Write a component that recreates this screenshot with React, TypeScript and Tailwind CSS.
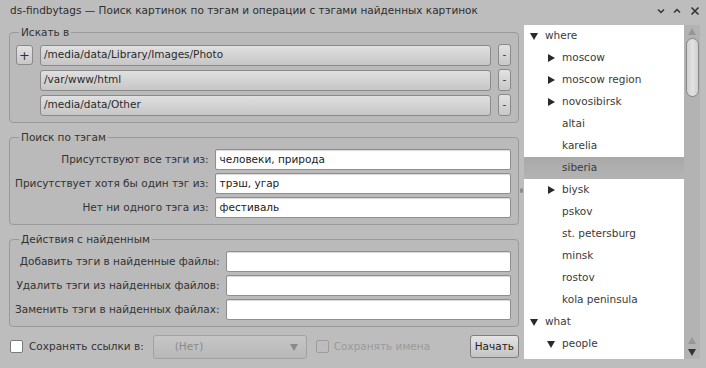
import React from "react";

const font = { fontFamily: '"DejaVu Sans", "Noto Sans", sans-serif' };

type TreeRow = { label: string; level: number; arrow?: "down" | "right"; selected?: boolean };

const TREE: TreeRow[] = [
  { label: "where", level: 0, arrow: "down" },
  { label: "moscow", level: 1, arrow: "right" },
  { label: "moscow region", level: 1, arrow: "right" },
  { label: "novosibirsk", level: 1, arrow: "right" },
  { label: "altai", level: 1 },
  { label: "karelia", level: 1 },
  { label: "siberia", level: 1, selected: true },
  { label: "biysk", level: 1, arrow: "right" },
  { label: "pskov", level: 1 },
  { label: "st. petersburg", level: 1 },
  { label: "minsk", level: 1 },
  { label: "rostov", level: 1 },
  { label: "kola peninsula", level: 1 },
  { label: "what", level: 0, arrow: "down" },
  { label: "people", level: 1, arrow: "down" },
];

const PATHS = ["/media/data/Library/Images/Photo", "/var/www/html", "/media/data/Other"];

const SEARCH = [
  { label: "Присутствуют все тэги из:", value: "человеки, природа" },
  { label: "Присутствует хотя бы один тэг из:", value: "трэш, угар" },
  { label: "Нет ни одного тэга из:", value: "фестиваль" },
];

const ACTIONS = [
  "Добавить тэги в найденные файлы:",
  "Удалить тэги из найденных файлов:",
  "Заменить тэги в найденных файлах:",
];

const Arrow = ({ dir, color = "#2a2a2a" }: { dir: "down" | "right" | "up"; color?: string }) => {
  const pts = dir === "down" ? "0,1 8,1 4,8" : dir === "up" ? "0,7 8,7 4,0" : "1,0 8,4 1,8";
  return (
    <svg width="8" height="8" viewBox="0 0 8 8" className="shrink-0">
      <polygon points={pts} fill={color} />
    </svg>
  );
};

const Group = ({ title, children }: { title: string; children: React.ReactNode }) => (
  <fieldset className="border border-[#9a9a9a] rounded-[4px] bg-[#bababa] pl-[5px] pr-[7px] pt-[5px] pb-[6px]">
    <legend className="ml-[4px] px-[2px] leading-[13px] text-[#333]">{title}</legend>
    {children}
  </fieldset>
);

const TextInput = ({ value }: { value?: string }) => (
  <div className="h-[21px] bg-white border border-[#8e8e8e] rounded-[2px] shadow-[inset_0_1px_1px_rgba(0,0,0,0.15)] flex items-center pl-[4px] text-[#222]">
    {value}
  </div>
);

export default function App() {
  return (
    <div style={font} className="w-[706px] h-[368px] bg-[#bdbdbd] flex flex-col text-[10.5px] text-[#333] overflow-hidden">
      <div className="h-[21px] flex items-center pl-[10px] pr-[6px] text-[#2e2e2e]">
        <span>ds-findbytags — Поиск картинок по тэгам и операции с тэгами найденных картинок</span>
        <div className="ml-auto flex items-center gap-[6px]">
          <svg width="10" height="10" viewBox="0 0 10 10">
            <path d="M2 3.5 L5 6.5 L8 3.5" stroke="#333" strokeWidth="1.5" fill="none" />
          </svg>
          <svg width="10" height="10" viewBox="0 0 10 10">
            <path d="M2 6.5 L5 3.5 L8 6.5" stroke="#333" strokeWidth="1.5" fill="none" />
          </svg>
          <svg width="10" height="10" viewBox="0 0 10 10" className="ml-[2px]">
            <path d="M1.5 1.5 L8.5 8.5 M8.5 1.5 L1.5 8.5" stroke="#333" strokeWidth="1.6" fill="none" />
          </svg>
        </div>
      </div>

      <div className="flex flex-1 min-h-0 pl-[9px] pr-[6px] pb-[9px]">
        <div className="w-[510px] flex flex-col pt-[5px]">
          <Group title="Искать в">
            <div className="flex flex-col gap-[3px] pl-[1px]">
              {PATHS.map((p, i) => (
                <div key={p} className="flex items-center">
                  <div className="w-[17px] mr-[7px] shrink-0">
                    {i === 0 && (
                      <div className="h-[20px] rounded-[3px] border border-[#8a8a8a] bg-gradient-to-b from-[#e2e2e2] to-[#c8c8c8] flex items-center justify-center text-[13px] leading-none text-[#333]">
                        +
                      </div>
                    )}
                  </div>
                  <div className="flex-1 h-[21px] rounded-[3px] border border-[#8a8a8a] bg-gradient-to-b from-[#e0e0e0] to-[#c6c6c6] flex items-center pl-[3px] text-[#2a2a2a]">
                    {p}
                  </div>
                  <div className="w-[13px] h-[22px] ml-[7px] rounded-[3px] border border-[#8a8a8a] bg-gradient-to-b from-[#e2e2e2] to-[#c8c8c8] flex items-center justify-center text-[#333]">
                    -
                  </div>
                </div>
              ))}
            </div>
          </Group>

          <div className="mt-[8px]">
            <Group title="Поиск по тэгам">
              <div className="grid grid-cols-[auto_1fr] gap-x-[6px] gap-y-[3px] items-center">
                {SEARCH.map((r) => (
                  <React.Fragment key={r.label}>
                    <div className="text-right">{r.label}</div>
                    <TextInput value={r.value} />
                  </React.Fragment>
                ))}
              </div>
            </Group>
          </div>

          <div className="mt-[8px]">
            <Group title="Действия с найденным">
              <div className="grid grid-cols-[auto_1fr] gap-x-[6px] gap-y-[3px] items-center">
                {ACTIONS.map((l) => (
                  <React.Fragment key={l}>
                    <div className="text-right">{l}</div>
                    <TextInput />
                  </React.Fragment>
                ))}
              </div>
            </Group>
          </div>

          <div className="flex items-center mt-auto h-[25px] pl-[1px]">
            <div className="w-[13px] h-[13px] bg-white border border-[#7a7a7a] rounded-[2px]" />
            <span className="ml-[6px]">Сохранять ссылки в:</span>
            <div className="ml-[9px] w-[154px] h-[24px] rounded-[3px] border border-[#a2a2a2] bg-gradient-to-b from-[#c6c6c6] to-[#b8b8b8] flex items-center pl-[21px] pr-[8px] text-[#8a8a8a]">
              <span>(Нет)</span>
              <span className="ml-auto">
                <Arrow dir="down" color="#8a8a8a" />
              </span>
            </div>
            <div className="ml-[9px] w-[13px] h-[13px] border border-[#9c9c9c] rounded-[2px]" />
            <span className="ml-[5px] text-[#9a9a9a]">Сохранять имена</span>
            <div className="ml-auto h-[23px] px-[4px] rounded-[3px] border border-[#7e7e7e] bg-gradient-to-b from-[#e4e4e4] to-[#c4c4c4] flex items-center text-[#222]">
              Начать
            </div>
          </div>
        </div>

        <div className="w-[5px] flex items-center justify-center">
          <div className="w-[3px] h-[5px] rounded-full bg-[#8c8c8c]" />
        </div>

        <div className="w-[160px] bg-white mt-[4px] overflow-hidden">
          {TREE.map((r) => (
            <div
              key={r.label}
              className={
                "h-[22px] flex items-center " +
                (r.selected ? "bg-gradient-to-b from-[#a9a9a9] to-[#b3b3b3]" : "")
              }
              style={{ paddingLeft: 6 + r.level * 17 }}
            >
              <div className="w-[15px] shrink-0">{r.arrow && <Arrow dir={r.arrow} />}</div>
              <span className="text-[#3a3a3a]">{r.label}</span>
            </div>
          ))}
        </div>

        <div className="w-[16px] mt-[4px] bg-[#b3b3b3] flex flex-col items-center py-[3px]">
          <Arrow dir="up" color="#979797" />
          <div className="mt-[2px] w-[13px] h-[59px] rounded-full border border-[#888] bg-gradient-to-r from-[#cfcfcf] via-[#e2e2e2] to-[#cfcfcf]" />
          <div className="mt-auto flex flex-col items-center gap-[3px]">
            <Arrow dir="up" color="#979797" />
            <Arrow dir="down" color="#333" />
          </div>
        </div>
      </div>
    </div>
  );
}
